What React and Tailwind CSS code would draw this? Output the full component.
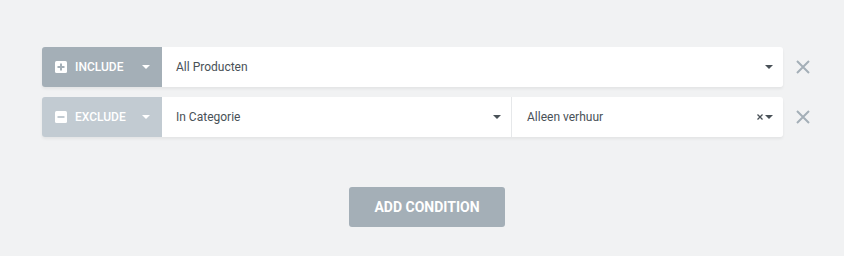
const Caret = ({ className }) => (
  <svg width="8" height="4" viewBox="0 0 8 4" className={className}>
    <path d="M0 0h8L4 4z" fill="currentColor" />
  </svg>
);

const Remove = () => (
  <button className="ml-[12px] flex h-[40px] w-[16px] items-center justify-center text-[#a4afb7]">
    <svg width="14" height="14" viewBox="0 0 14 14">
      <path d="M1 1l12 12M13 1L1 13" stroke="currentColor" strokeWidth="2" />
    </svg>
  </button>
);

function TypeButton({ label, bg, minus }) {
  return (
    <div className={`flex h-[40px] w-[120px] shrink-0 items-center rounded-l-[3px] pl-[13px] pr-[12px] text-white ${bg}`}>
      <svg width="12" height="12" viewBox="0 0 12 12">
        <rect width="12" height="12" rx="1.5" fill="#fff" />
        {minus ? (
          <path d="M2.5 6h7" stroke="#c2cbd2" strokeWidth="2" />
        ) : (
          <path d="M2.5 6h7M6 2.5v7" stroke="#a4afb7" strokeWidth="2" />
        )}
      </svg>
      <span className="ml-[8px] text-[12px] font-medium uppercase">{label}</span>
      <Caret className="ml-auto text-white" />
    </div>
  );
}

function Select({ value, clear, className }) {
  return (
    <div className={`flex h-[40px] items-center bg-white pl-[14px] pr-[10px] ${className}`}>
      <span className="text-[12px] text-[#495157]">{value}</span>
      <span className="ml-auto flex items-center gap-[2px] text-[#495157]">
        {clear && (
          <svg width="6" height="6" viewBox="0 0 6 6">
            <path d="M0.5 0.5l5 5M5.5 0.5l-5 5" stroke="#495157" strokeWidth="1.3" />
          </svg>
        )}
        <Caret />
      </span>
    </div>
  );
}

export default function App() {
  return (
    <div className="min-h-[256px] bg-[#f1f2f3] pt-[47px] font-['Roboto',sans-serif]">
      <div className="ml-[42px] flex flex-col gap-[10px]">
        <div className="flex items-center">
          <div className="flex w-[741px] rounded-[3px] shadow-[0_2px_3px_rgba(0,0,0,0.06)]">
            <TypeButton label="Include" bg="bg-[#a4afb7]" />
            <Select value="All Producten" className="flex-1 rounded-r-[3px]" />
          </div>
          <Remove />
        </div>
        <div className="flex items-center">
          <div className="flex w-[741px] rounded-[3px] shadow-[0_2px_3px_rgba(0,0,0,0.06)]">
            <TypeButton label="Exclude" bg="bg-[#c2cbd2]" minus />
            <Select value="In Categorie" className="w-[350px] border-r border-[#e6e8ea]" />
            <Select value="Alleen verhuur" clear className="flex-1 rounded-r-[3px] pl-[15px]" />
          </div>
          <Remove />
        </div>
      </div>
      <div className="mt-[50px] flex justify-center pl-[10px]">
        <button className="h-[40px] w-[156px] rounded-[3px] bg-[#a4afb7] text-[14px] font-bold uppercase text-white">
          Add Condition
        </button>
      </div>
    </div>
  );
}
